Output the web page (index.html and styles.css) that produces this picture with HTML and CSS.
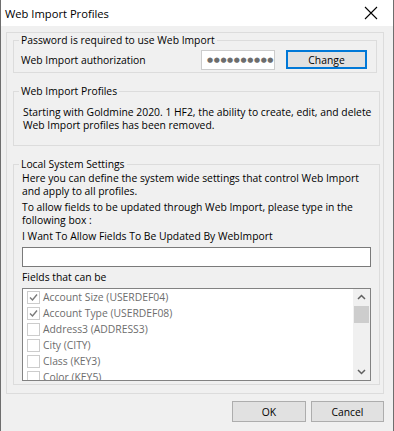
FILE: index.html
```html
<!DOCTYPE html>
<html>
<head>
<meta charset="utf-8">
<link rel="stylesheet" href="styles.css">
</head>
<body>
<div class="window">
  <div class="titlebar">
    <span class="title">Web Import Profiles</span>
    <svg class="close" width="14" height="14" viewBox="0 0 14 14"><path d="M1 1 L13 13 M13 1 L1 13" stroke="#000" stroke-width="1.1" fill="none"/></svg>
  </div>
  <div class="body">
    <div class="panel">
      <fieldset class="grp g1">
        <legend>Password is required to use Web Import</legend>
        <div class="authrow">
          <span class="authlabel">Web Import authorization</span>
          <div class="pw"><span>●●●●●●●●●●●●●●</span></div>
          <div class="btn focus">Change</div>
        </div>
      </fieldset>
      <fieldset class="grp g2">
        <legend>Web Import Profiles</legend>
        <p class="note">Starting with Goldmine 2020. 1 HF2, the ability to create, edit, and delete<br>Web Import profiles has been removed.</p>
      </fieldset>
      <fieldset class="grp g3">
        <legend>Local System Settings</legend>
        <p class="txt">Here you can define the system wide settings that control Web Import<br>and apply to all profiles.</p>
        <p class="txt sp">To allow fields to be updated through Web Import, please type in the<br>following box :</p>
        <p class="txt sp">I Want To Allow Fields To Be Updated By WebImport</p>
        <div class="textbox"></div>
        <p class="txt fl">Fields that can be</p>
        <div class="listbox">
          <div class="items">
            <div class="item"><span class="cb checked"><svg width="11" height="11" viewBox="0 0 11 11"><path d="M2 5.5 L4.5 8 L9 2.5" stroke="#7a7a7a" stroke-width="1.4" fill="none"/></svg></span>Account Size (USERDEF04)</div>
            <div class="item"><span class="cb checked"><svg width="11" height="11" viewBox="0 0 11 11"><path d="M2 5.5 L4.5 8 L9 2.5" stroke="#7a7a7a" stroke-width="1.4" fill="none"/></svg></span>Account Type (USERDEF08)</div>
            <div class="item"><span class="cb"></span>Address3 (ADDRESS3)</div>
            <div class="item"><span class="cb"></span>City (CITY)</div>
            <div class="item"><span class="cb"></span>Class (KEY3)</div>
            <div class="item"><span class="cb"></span>Color (KEY5)</div>
          </div>
          <div class="scrollbar">
            <svg class="arr" width="17" height="17" viewBox="0 0 17 17"><path d="M5 10 L8.5 6.5 L12 10" stroke="#606060" stroke-width="1.5" fill="none"/></svg>
            <div class="thumb"></div>
            <div class="track"></div>
            <svg class="arr" width="17" height="17" viewBox="0 0 17 17"><path d="M5 7 L8.5 10.5 L12 7" stroke="#606060" stroke-width="1.5" fill="none"/></svg>
          </div>
        </div>
      </fieldset>
    </div>
    <div class="buttons">
      <div class="btn ok">OK</div>
      <div class="btn cancel">Cancel</div>
    </div>
  </div>
</div>
</body>
</html>
```

FILE: styles.css
```css
* { box-sizing: border-box; }
html, body { margin: 0; padding: 0; }
body {
  width: 394px;
  height: 431px;
  overflow: hidden;
  font-family: "Open Sans", "Noto Sans", sans-serif;
  font-size: 10.35px;
  color: #000;
  background: #f0f0f0;
}
.window {
  width: 394px;
  height: 431px;
  border-left: 1px solid #6e6e6e;
  border-right: 1px solid #6e6e6e;
  display: flex;
  flex-direction: column;
}
.titlebar {
  height: 26px;
  background: #fff;
  display: flex;
  align-items: center;
  justify-content: space-between;
  padding: 0 15px 0 4px;
}
.title {
  font-size: 11.2px;
  color: #000;
}
.close { display: block; }
.body {
  flex: 1;
  background: #f0f0f0;
  padding: 6px 0 0 5px;
}
.panel {
  width: 378px;
  height: 362px;
  border: 1px solid #dcdcdc;
  padding: 1px 0 0 6px;
}
.grp {
  margin: 0;
  border: 1px solid #dcdcdc;
  padding: 0 8px 0 7px;
  min-width: 0;
}
.grp legend {
  padding: 0 2px;
  line-height: 13px;
}
.g1 { width: 364px; padding-bottom: 3px; }
.g1 legend { margin-left: -2px; }
.g2 { width: 367px; margin-top: 12px; padding: 8px 0 13px 9px; }
.g2 legend { margin-left: -4px; }
.g3 { width: 367px; margin-top: 12px; padding: 1px 8px 3px 8px; }
.g3 legend { margin-left: -3px; }
.authrow {
  display: flex;
  align-items: center;
  margin-top: 3px;
  height: 19px;
}
.authlabel { width: 180px; }
.pw {
  width: 74px;
  height: 20px;
  background: #fff;
  border: 1px solid #cccccc;
  overflow: hidden;
  white-space: nowrap;
  font-family: "DejaVu Sans", sans-serif;
  font-size: 7px;
  line-height: 18px;
  color: #6d6d6d;
  padding-left: 5px;
  letter-spacing: 0.6px;
}
.btn {
  background: #e1e1e1;
  border: 1px solid #adadad;
  display: flex;
  align-items: center;
  justify-content: center;
}
.focus {
  width: 81px;
  height: 19px;
  margin-left: 11px;
  border: 2px solid #0078d7;
}
.note { margin: 0; line-height: 13px; white-space: nowrap; }
.txt { margin: 0; line-height: 13px; white-space: nowrap; }
.sp { margin-top: 3px; }
.textbox {
  margin-top: 4px;
  height: 20px;
  background: #fff;
  border: 1px solid #7a7a7a;
}
.fl { margin-top: 4px; }
.listbox {
  margin-top: 4px;
  height: 93px;
  background: #fff;
  border: 1px solid #828282;
  display: flex;
  overflow: hidden;
}
.items {
  flex: 1;
  overflow: hidden;
  padding: 0 0 0 4px;
}
.item {
  height: 16px;
  display: flex;
  align-items: center;
  color: #6d6d6d;
  white-space: nowrap;
}
.cb {
  width: 13px;
  height: 13px;
  border: 1px solid #cccccc;
  background: #fff;
  margin-right: 3px;
  display: flex;
  align-items: center;
  justify-content: center;
  flex: none;
}
.scrollbar {
  width: 17px;
  background: #f0f0f0;
  display: flex;
  flex-direction: column;
}
.arr { display: block; flex: none; }
.thumb {
  height: 17px;
  margin: 0 1px;
  background: #cdcdcd;
  flex: none;
}
.track { flex: 1; }
.buttons {
  display: flex;
  justify-content: flex-end;
  gap: 5px;
  padding-right: 9px;
  margin-top: 7px;
}
.ok, .cancel {
  width: 74px;
  height: 21px;
}
.cancel { width: 73px; }
```
